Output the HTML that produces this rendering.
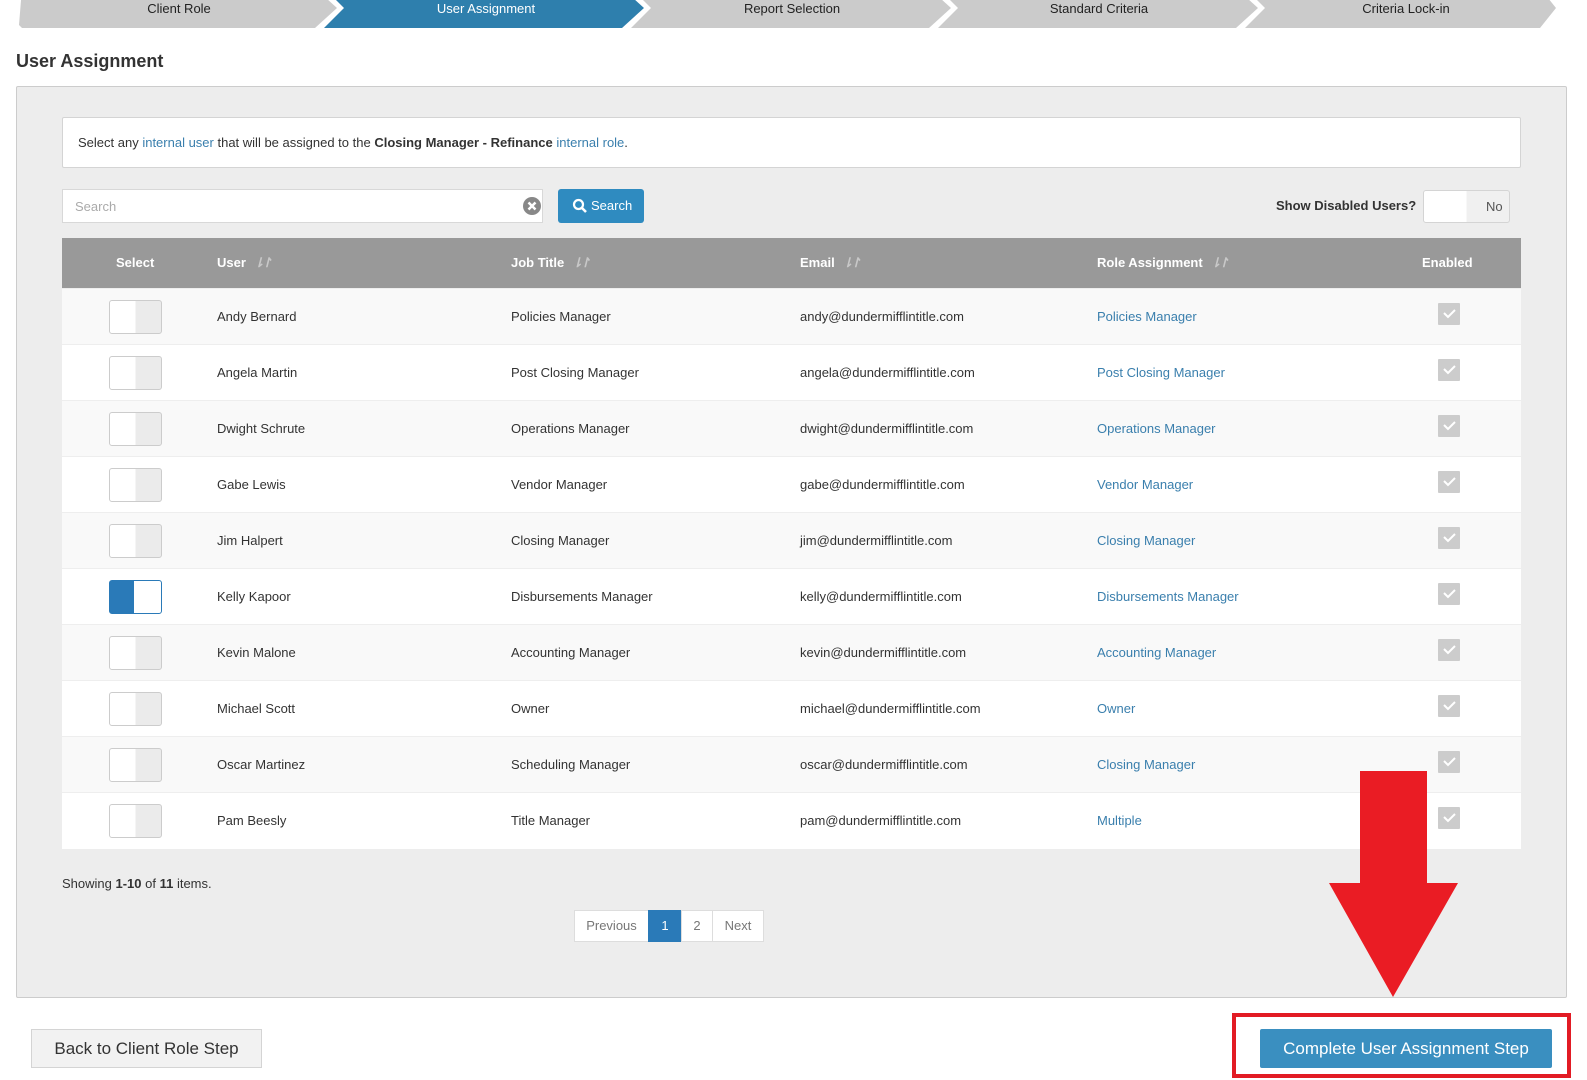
<!DOCTYPE html>
<html><head><meta charset="utf-8"><style>
*{box-sizing:border-box;margin:0;padding:0}
body{width:1587px;height:1080px;background:#fff;font-family:"Liberation Sans",sans-serif;color:#333;position:relative;overflow:hidden;font-size:13px}
.abs{position:absolute}
.panel{left:16px;top:86px;width:1551px;height:912px;background:#ededed;border:1px solid #ccc;border-radius:2px}
.notice{left:62px;top:117px;width:1459px;height:51px;background:#fff;border:1px solid #d4d4d4;border-radius:2px;padding:17px 15px;font-size:13px}
a,.lk{color:#3a7fad;text-decoration:none}
.inp{left:62px;top:189px;width:481px;height:34px;background:#fff;border:1px solid #d8d8d8;padding:9px 12px;color:#aaa;font-size:13px}
.btn{left:558px;top:189px;width:86px;height:34px;background:#2f8bc0;border-radius:3px;color:#fff;font-size:13px;padding:9px 0 0 33px}
.thead{left:62px;top:238px;width:1459px;height:50px;background:#999;color:#fff;font-weight:bold;font-size:13px}
.thead span{position:absolute;top:17px}
.row{position:absolute;left:62px;width:1459px;height:56px;border-top:1px solid #eee;font-size:13px}
.row span{position:absolute;top:20px}
.tg{position:absolute;left:47px;top:11px;width:53px;height:34px;border:1px solid #ccc;border-radius:3px;background:linear-gradient(90deg,#fff 50%,#ebebeb 50%)}
.tg.on{background:linear-gradient(90deg,#2a7ab8 47%,#fff 47%);border-color:#2a7ab8}
.cb{position:absolute;left:1376px;top:14px;width:22px;height:22px;background:#ccc;border-radius:1px}
.sort{display:inline-block;color:#c8c8c8;margin-left:4px;letter-spacing:-3px;font-weight:bold}
.pg{top:910px;height:32px;border:1px solid #ddd;background:#fff;color:#777;font-size:13px;text-align:center;line-height:30px}
</style></head><body>
<svg class="abs" style="left:0;top:0" width="1587" height="30">
<polygon points="22,-12 315,-12 337,8 315,28 22,28 19,25" fill="#cbcbcb"/>
<polygon points="324,-12 622,-12 644,8 622,28 324,28 344,8" fill="#2e7fad"/>
<polygon points="631,-12 929,-12 951,8 929,28 631,28 651,8" fill="#cbcbcb"/>
<polygon points="938,-12 1236,-12 1258,8 1236,28 938,28 958,8" fill="#cbcbcb"/>
<polygon points="1245,-12 1540,-12 1556,8 1540,28 1245,28 1265,8" fill="#cbcbcb"/>
<g font-family="Liberation Sans,sans-serif" font-size="13" text-anchor="middle">
<text x="179" y="13" fill="#222">Client Role</text>
<text x="486" y="13" fill="#fff">User Assignment</text>
<text x="792" y="13" fill="#222">Report Selection</text>
<text x="1099" y="13" fill="#222">Standard Criteria</text>
<text x="1406" y="13" fill="#222">Criteria Lock-in</text>
</g></svg>
<div class="abs" style="left:16px;top:51px;font-size:18px;font-weight:bold;color:#333">User Assignment</div>
<div class="abs panel"></div>
<div class="abs notice">Select any <a>internal user</a> that will be assigned to the <b>Closing Manager - Refinance</b> <a>internal role</a>.</div>
<div class="abs inp">Search</div>
<svg class="abs" style="left:522px;top:196px" width="20" height="20"><circle cx="10" cy="10" r="9" fill="#888"/><path d="M6.5 6.5L13.5 13.5M13.5 6.5L6.5 13.5" stroke="#fff" stroke-width="2.5"/></svg>
<div class="abs btn">Search</div>
<svg class="abs" style="left:572px;top:198px" width="16" height="16"><circle cx="6.5" cy="6.5" r="4.5" fill="none" stroke="#fff" stroke-width="2.2"/><path d="M10 10L14 14" stroke="#fff" stroke-width="2.6"/></svg>
<div class="abs" style="left:1276px;top:198px;font-weight:bold;font-size:13px;color:#333">Show Disabled Users?</div>
<div class="abs" style="left:1423px;top:190px;width:87px;height:33px;border:1px solid #d4d4d4;border-radius:3px;background:linear-gradient(90deg,#fff 50%,#f0f0f0 50%);font-size:13px;color:#555;padding:8px 0 0 62px">No</div>
<div class="abs thead">
<span style="left:54px">Select</span>
<span style="left:155px">User <i class="sort">⇂↾</i></span>
<span style="left:449px">Job Title <i class="sort">⇂↾</i></span>
<span style="left:738px">Email <i class="sort">⇂↾</i></span>
<span style="left:1035px">Role Assignment <i class="sort">⇂↾</i></span>
<span style="left:1360px">Enabled</span>
</div>
<div class="row" style="top:288px;background:#f9f9f9"><div class="tg"></div><span style="left:155px">Andy Bernard</span><span style="left:449px">Policies Manager</span><span style="left:738px">andy@dundermifflintitle.com</span><span class="lk" style="left:1035px">Policies Manager</span><div class="cb"></div></div>
<div class="row" style="top:344px;background:#fff"><div class="tg"></div><span style="left:155px">Angela Martin</span><span style="left:449px">Post Closing Manager</span><span style="left:738px">angela@dundermifflintitle.com</span><span class="lk" style="left:1035px">Post Closing Manager</span><div class="cb"></div></div>
<div class="row" style="top:400px;background:#f9f9f9"><div class="tg"></div><span style="left:155px">Dwight Schrute</span><span style="left:449px">Operations Manager</span><span style="left:738px">dwight@dundermifflintitle.com</span><span class="lk" style="left:1035px">Operations Manager</span><div class="cb"></div></div>
<div class="row" style="top:456px;background:#fff"><div class="tg"></div><span style="left:155px">Gabe Lewis</span><span style="left:449px">Vendor Manager</span><span style="left:738px">gabe@dundermifflintitle.com</span><span class="lk" style="left:1035px">Vendor Manager</span><div class="cb"></div></div>
<div class="row" style="top:512px;background:#f9f9f9"><div class="tg"></div><span style="left:155px">Jim Halpert</span><span style="left:449px">Closing Manager</span><span style="left:738px">jim@dundermifflintitle.com</span><span class="lk" style="left:1035px">Closing Manager</span><div class="cb"></div></div>
<div class="row" style="top:568px;background:#fff"><div class="tg on"></div><span style="left:155px">Kelly Kapoor</span><span style="left:449px">Disbursements Manager</span><span style="left:738px">kelly@dundermifflintitle.com</span><span class="lk" style="left:1035px">Disbursements Manager</span><div class="cb"></div></div>
<div class="row" style="top:624px;background:#f9f9f9"><div class="tg"></div><span style="left:155px">Kevin Malone</span><span style="left:449px">Accounting Manager</span><span style="left:738px">kevin@dundermifflintitle.com</span><span class="lk" style="left:1035px">Accounting Manager</span><div class="cb"></div></div>
<div class="row" style="top:680px;background:#fff"><div class="tg"></div><span style="left:155px">Michael Scott</span><span style="left:449px">Owner</span><span style="left:738px">michael@dundermifflintitle.com</span><span class="lk" style="left:1035px">Owner</span><div class="cb"></div></div>
<div class="row" style="top:736px;background:#f9f9f9"><div class="tg"></div><span style="left:155px">Oscar Martinez</span><span style="left:449px">Scheduling Manager</span><span style="left:738px">oscar@dundermifflintitle.com</span><span class="lk" style="left:1035px">Closing Manager</span><div class="cb"></div></div>
<div class="row" style="top:792px;background:#fff;height:57px"><div class="tg"></div><span style="left:155px">Pam Beesly</span><span style="left:449px">Title Manager</span><span style="left:738px">pam@dundermifflintitle.com</span><span class="lk" style="left:1035px">Multiple</span><div class="cb"></div></div>
<svg class="abs" style="left:0;top:0;pointer-events:none" width="1587" height="1080"><g fill="none" stroke="#fff" stroke-width="2">
<path d="M1444 313l4 4 7-7"/><path d="M1444 369l4 4 7-7"/><path d="M1444 425l4 4 7-7"/><path d="M1444 481l4 4 7-7"/><path d="M1444 537l4 4 7-7"/><path d="M1444 593l4 4 7-7"/><path d="M1444 649l4 4 7-7"/><path d="M1444 705l4 4 7-7"/><path d="M1444 761l4 4 7-7"/><path d="M1444 817l4 4 7-7"/></g></svg>
<div class="abs" style="left:62px;top:876px;font-size:13px">Showing <b>1-10</b> of <b>11</b> items.</div>
<div class="abs pg" style="left:574px;width:75px">Previous</div>
<div class="abs pg" style="left:648px;width:34px;background:#2a7ab8;color:#fff;border-color:#2a7ab8">1</div>
<div class="abs pg" style="left:681px;width:32px">2</div>
<div class="abs pg" style="left:712px;width:52px">Next</div>
<div class="abs" style="left:31px;top:1029px;width:231px;height:39px;background:#f2f2f2;border:1px solid #d4d4d4;font-size:17px;color:#333;text-align:center;line-height:37px">Back to Client Role Step</div>
<div class="abs" style="left:1232px;top:1013px;width:339px;height:65px;border:4px solid #e21b24"></div>
<div class="abs" style="left:1260px;top:1029px;width:292px;height:39px;background:#3a8fc0;border-radius:2px;color:#fff;font-size:17px;text-align:center;line-height:39px">Complete User Assignment Step</div>
<svg class="abs" style="left:0;top:0" width="1587" height="1080"><polygon points="1360,771 1427,771 1427,883 1458,883 1393,997 1329,883 1360,883" fill="#ea1c24"/></svg>
</body></html>
